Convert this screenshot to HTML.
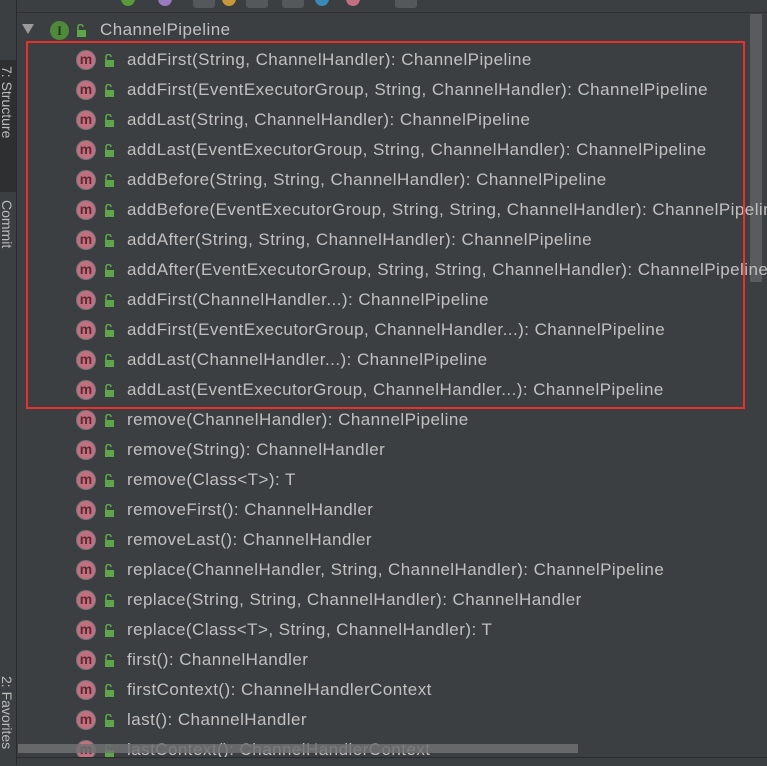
<!DOCTYPE html>
<html><head><style>
body{margin:0;width:767px;height:765px;background:#3c3f41;overflow:hidden;position:relative;font-family:"Liberation Sans",sans-serif;}
.side{position:absolute;left:0;top:0;width:16px;height:765px;background:#3c3f41;border-right:1px solid #2b2b2b;}
.tab{position:absolute;left:0;width:16px;background:#2d2f30;}
.vt{position:absolute;left:-1px;color:#bbb;font-size:14px;white-space:nowrap;transform-origin:0 0;transform:rotate(90deg) translateY(-16px);}
.tool{position:absolute;left:17px;top:0;width:750px;height:12px;background:#3c3f41;border-bottom:1px solid #323232;}
.row{position:absolute;left:0;height:30px;line-height:30px;color:#c0c0c0;font-size:17px;letter-spacing:0.45px;white-space:nowrap;}
.m{position:absolute;left:77px;top:6px;width:18px;height:18px;border-radius:50%;background:#c07080;box-shadow:0 0 0 1px #777;color:#5a2a32;font-size:14px;line-height:17px;text-align:center;font-weight:bold;letter-spacing:0}
.lk{position:absolute;left:103px;top:9px;}
.t{position:absolute;left:127px;top:0;}
</style></head><body>
<div class="tool">
<div style="position:absolute;left:104px;top:-8px;width:14px;height:14px;border-radius:50%;background:#5a9a3a"></div>
<div style="position:absolute;left:141px;top:-8px;width:14px;height:14px;border-radius:50%;background:#9a7ac0"></div>
<div style="position:absolute;left:176px;top:-4px;width:22px;height:12px;border-radius:3px;background:#55585a"></div>
<div style="position:absolute;left:205px;top:-8px;width:14px;height:14px;border-radius:50%;background:#c8983a"></div>
<div style="position:absolute;left:229px;top:-4px;width:22px;height:12px;border-radius:3px;background:#55585a"></div>
<div style="position:absolute;left:265px;top:-4px;width:22px;height:12px;border-radius:3px;background:#55585a"></div>
<div style="position:absolute;left:298px;top:-8px;width:14px;height:14px;border-radius:50%;background:#3a8ab8"></div>
<div style="position:absolute;left:329px;top:-8px;width:14px;height:14px;border-radius:50%;background:#c07080"></div>
<div style="position:absolute;left:378px;top:-4px;width:22px;height:12px;border-radius:3px;background:#55585a"></div>
</div>
<div class="side">
<div class="tab" style="top:60px;height:132px"></div>
<div class="vt" style="top:66px">7: Structure</div>
<div class="vt" style="top:200px">Commit</div>
<div class="vt" style="top:676px">2: Favorites</div>
</div>
<div style="position:absolute;left:750px;top:14px;width:12px;height:268px;background:#595b5d"></div>
<div class="row" style="top:15px;">
<svg style="position:absolute;left:22px;top:9px" width="12" height="10"><polygon points="0,0 12,0 6,10" fill="#9a9a9a"/></svg>
<div style="position:absolute;left:50px;top:6px;width:19px;height:19px;border-radius:50%;background:#4e8a3a;color:#1e3a18;font-size:13px;line-height:19px;text-align:center;font-weight:bold;letter-spacing:0;font-family:'Liberation Serif',serif">I</div>
<svg style="position:absolute;left:75px;top:9px" width="12" height="13"><path d="M3 6V3a2.5 2.5 0 0 1 5 0" stroke="#5fa64a" stroke-width="1.6" fill="none"/><rect x="2" y="6" width="9" height="7" fill="#5fa64a"/></svg>
<span style="position:absolute;left:100px">ChannelPipeline</span>
</div>
<div style="position:absolute;left:26px;top:41px;width:715px;height:364px;border:2px solid #e8302c;z-index:5"></div>
<div id="list"></div>
<div style="position:absolute;left:18px;top:744px;width:560px;height:9px;background:rgba(110,112,114,0.85);z-index:3"></div>
<div style="position:absolute;left:17px;top:757px;width:750px;height:8px;background:#3c3f41;border-top:1px solid #2b2b2b;z-index:3"></div>
<script>
var items=["addFirst(String, ChannelHandler): ChannelPipeline","addFirst(EventExecutorGroup, String, ChannelHandler): ChannelPipeline","addLast(String, ChannelHandler): ChannelPipeline","addLast(EventExecutorGroup, String, ChannelHandler): ChannelPipeline","addBefore(String, String, ChannelHandler): ChannelPipeline","addBefore(EventExecutorGroup, String, String, ChannelHandler): ChannelPipeline","addAfter(String, String, ChannelHandler): ChannelPipeline","addAfter(EventExecutorGroup, String, String, ChannelHandler): ChannelPipeline","addFirst(ChannelHandler...): ChannelPipeline","addFirst(EventExecutorGroup, ChannelHandler...): ChannelPipeline","addLast(ChannelHandler...): ChannelPipeline","addLast(EventExecutorGroup, ChannelHandler...): ChannelPipeline","remove(ChannelHandler): ChannelPipeline","remove(String): ChannelHandler","remove(Class<T>): T","removeFirst(): ChannelHandler","removeLast(): ChannelHandler","replace(ChannelHandler, String, ChannelHandler): ChannelPipeline","replace(String, String, ChannelHandler): ChannelHandler","replace(Class<T>, String, ChannelHandler): T","first(): ChannelHandler","firstContext(): ChannelHandlerContext","last(): ChannelHandler","lastContext(): ChannelHandlerContext"];
var h="";items.forEach(function(s,i){var e=s.replace(/</g,"&lt;").replace(/>/g,"&gt;");
h+='<div class="row" style="top:'+(45+i*30)+'px"><div class="m">m</div><svg class="lk" width="12" height="13"><path d="M3 6V3a2.5 2.5 0 0 1 5 0" stroke="#5fa64a" stroke-width="1.6" fill="none"/><rect x="2" y="6" width="9" height="7" fill="#5fa64a"/></svg><span class="t">'+e+'</span></div>';});
document.getElementById("list").innerHTML=h;
</script>
</body></html>
